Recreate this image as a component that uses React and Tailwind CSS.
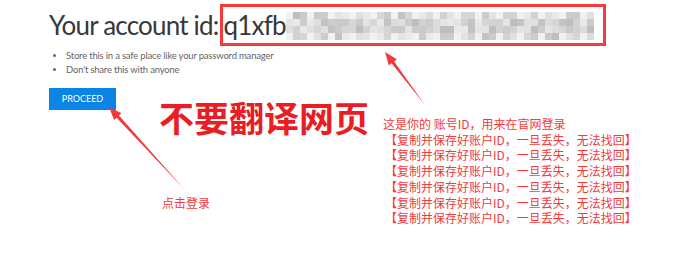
import React from 'react';

// deterministic mosaic greys for the blurred part of the id
const shades = ['#d2d2d2', '#dcdcdc', '#cacaca', '#e4e4e4', '#c3c3c3', '#d6d6d9', '#e0e0e0', '#cecccA', '#e9e9e9', '#bebec2'];
function mosaicCells(cols, rows) {
  const cells = [];
  let seed = 11;
  for (let r = 0; r < rows; r++) {
    for (let c = 0; c < cols; c++) {
      seed = (seed * 9301 + 49297) % 233280;
      const edge = r === 0 || r === rows - 1;
      const idx = Math.floor((seed / 233280) * shades.length);
      cells.push(edge && seed % 3 === 0 ? '#f1f1f1' : shades[idx]);
    }
  }
  return cells;
}

const copyLine = '【复制并保存好账户ID，一旦丢失，无法找回】';

function Arrow({ x1, y1, x2, y2 }) {
  // tapered arrow from (x1,y1) tail to (x2,y2) tip
  const dx = x2 - x1;
  const dy = y2 - y1;
  const len = Math.hypot(dx, dy);
  const ux = dx / len;
  const uy = dy / len;
  const px = -uy;
  const py = ux;
  const head = 13;
  const hw = 5;
  const sw = 1.6;
  const bx = x2 - ux * head;
  const by = y2 - uy * head;
  const pts = [
    [x1, y1],
    [bx + px * sw, by + py * sw],
    [bx + px * hw, by + py * hw],
    [x2, y2],
    [bx - px * hw, by - py * hw],
    [bx - px * sw, by - py * sw],
  ]
    .map((p) => p.join(','))
    .join(' ');
  return <polygon points={pts} fill="#f23a3a" />;
}

export default function App() {
  const cells = mosaicCells(44, 4);
  return (
    <div
      className="relative w-[680px] h-[255px] bg-white overflow-hidden"
      style={{ fontFamily: 'Lato, "Noto Sans CJK SC", sans-serif' }}
    >
      <div className="pl-[49px] pt-[4px]">
        {/* heading */}
        <div className="flex items-center h-[42px]">
          <span className="text-[26px] leading-none text-[#383838] tracking-[-0.8px]">Your account id:</span>
          <div className="ml-[1px] flex items-center w-[386px] h-[42px] border-[3px] border-[#f43a3a] pl-[1px]">
            <span className="text-[26px] leading-none text-[#383838] tracking-[-0.8px]">q1xfb</span>
            <div className="grid grid-cols-[repeat(44,7px)] mt-[2px] blur-[0.6px]">
              {cells.map((c, i) => (
                <div key={i} className="w-[7px] h-[7px]" style={{ background: c }} />
              ))}
            </div>
          </div>
        </div>

        {/* bullets */}
        <ul className="mt-[3px] pl-[17px] list-disc text-[9.5px] leading-[14px] tracking-[-0.2px] text-[#666] marker:text-[#666]">
          <li>Store this in a safe place like your password manager</li>
          <li>Don't share this with anyone</li>
        </ul>

        <button className="mt-[11px] w-[67px] h-[22px] bg-[#0b84e6] text-white text-[9px] flex items-center justify-center border-0">
          PROCEED
        </button>
      </div>

      {/* annotations */}
      <div
        className="absolute left-[159px] top-[99px] text-[35px] font-bold text-[#ea1c24] leading-none whitespace-nowrap"
        style={{ fontFamily: '"Noto Sans CJK SC", sans-serif' }}
      >
        不要翻译网页
      </div>

      <div
        className="absolute left-[383px] top-[116px] text-[12px] leading-[15.7px] text-[#f23a3a] whitespace-nowrap"
        style={{ fontFamily: '"Noto Sans CJK SC", sans-serif' }}
      >
        <div>这是你的 账号ID，用来在官网登录</div>
        {[0, 1, 2, 3, 4, 5].map((i) => (
          <div key={i} className="pl-[2px]">{copyLine}</div>
        ))}
      </div>

      <div
        className="absolute left-[162px] top-[197px] text-[12px] leading-none text-[#f23a3a] whitespace-nowrap"
        style={{ fontFamily: '"Noto Sans CJK SC", sans-serif' }}
      >
        点击登录
      </div>

      <svg className="absolute inset-0 pointer-events-none" width="680" height="255">
        <Arrow x1={185} y1={190} x2={109} y2={107} />
        <Arrow x1={425} y1={105} x2={385} y2={52} />
      </svg>
    </div>
  );
}
